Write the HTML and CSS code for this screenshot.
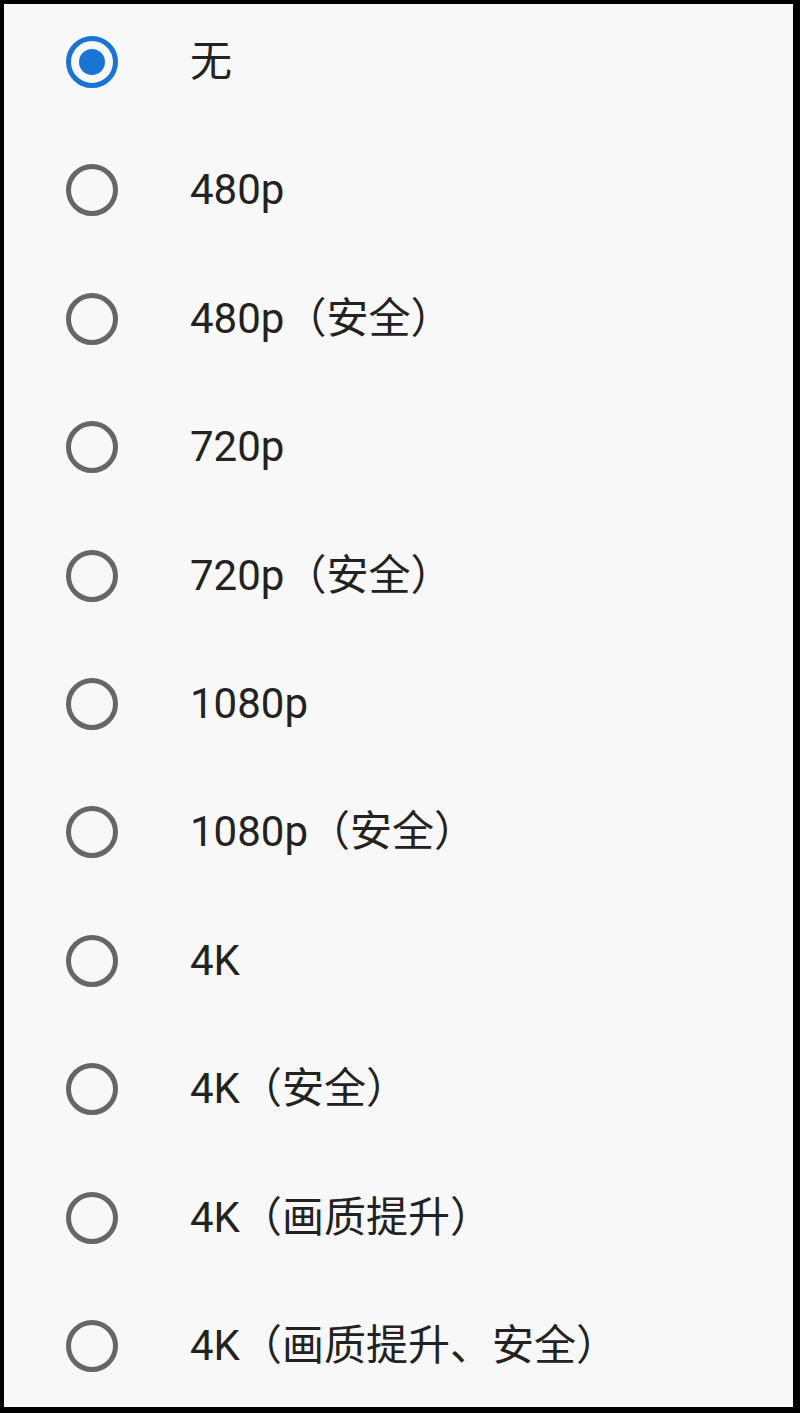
FILE: index.html
```html
<!DOCTYPE html>
<html lang="zh-CN">
<head>
    <meta charset="UTF-8">
    <meta name="viewport" content="width=device-width, initial-scale=1.0">
    <title>画质</title>
    <link rel="stylesheet" href="styles.css">
</head>
<body>
    <div class="frame">
        <div class="options">
            <div class="option checked"><span class="radio"></span><span class="label">无</span></div>
            <div class="option"><span class="radio"></span><span class="label">480p</span></div>
            <div class="option"><span class="radio"></span><span class="label">480p（安全）</span></div>
            <div class="option"><span class="radio"></span><span class="label">720p</span></div>
            <div class="option"><span class="radio"></span><span class="label">720p（安全）</span></div>
            <div class="option"><span class="radio"></span><span class="label">1080p</span></div>
            <div class="option"><span class="radio"></span><span class="label">1080p（安全）</span></div>
            <div class="option"><span class="radio"></span><span class="label">4K</span></div>
            <div class="option"><span class="radio"></span><span class="label">4K（安全）</span></div>
            <div class="option"><span class="radio"></span><span class="label">4K（画质提升）</span></div>
            <div class="option"><span class="radio"></span><span class="label">4K（画质提升、安全）</span></div>
        </div>
    </div>
</body>
</html>
```

FILE: styles.css
```css
body {
    margin: 0;
    padding: 0;
    background-color: #000;
    font-family: Roboto, "Noto Sans CJK SC", sans-serif;
}
.frame {
    height: 1413px;
    box-sizing: border-box;
    border-style: solid;
    border-color: #000;
    border-width: 4px 7px 6px 4px;
    background-color: #f8f8f8;
    overflow: hidden;
}
.options {
    display: flex;
    flex-direction: column;
}
.option {
    height: 128.4px;
    box-sizing: border-box;
    padding: 32px 0 0 62px;
    display: flex;
    align-items: center;
    align-self: stretch;
    gap: 72px;
}
.option .radio {
    align-self: flex-start;
}
.radio {
    width: 52px;
    height: 52px;
    box-sizing: border-box;
    border: 5px solid #666;
    border-radius: 50%;
    flex-shrink: 0;
    display: flex;
    align-items: center;
    justify-content: center;
}
.option.checked .radio {
    border-color: #1a74d4;
}
.option.checked .radio::after {
    content: "";
    width: 26px;
    height: 26px;
    border-radius: 50%;
    background-color: #1a74d4;
}
.label {
    align-self: flex-start;
    font-size: 42px;
    line-height: 54px;
    margin-top: -1px;
    color: #222;
    text-spacing-trim: space-all;
}
```
